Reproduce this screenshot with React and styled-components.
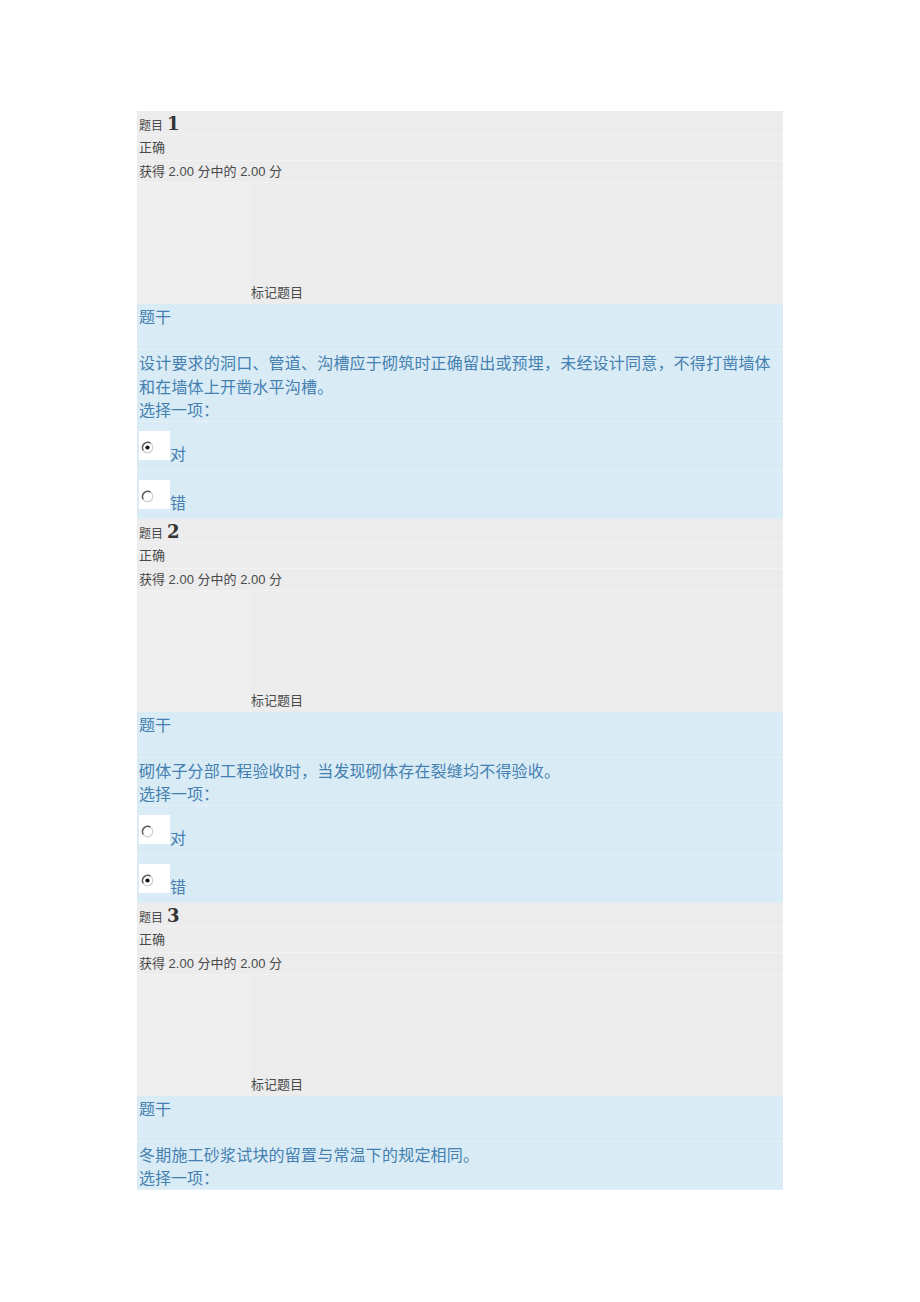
import React from "react";
import styled, { createGlobalStyle } from "styled-components";

const GlobalStyle = createGlobalStyle`
  html, body {
    margin: 0;
    padding: 0;
    background: #fff;
  }
  body {
    font-family: "Liberation Sans", "Noto Sans CJK SC", sans-serif;
  }
`;

const Page = styled.div`
  width: 920px;
  min-height: 1302px;
  padding-top: 111px;
  box-sizing: border-box;
`;

const Panel = styled.div`
  width: 646px;
  margin-left: 137px;
`;

// 灰色信息区
const Info = styled.div`
  background: #ececed;
  color: #4a4a4a;
  font-size: 13px;
  padding-top: 2px;
`;

const InfoRow = styled.div`
  height: ${(p) => p.h}px;
  line-height: ${(p) => p.h}px;
  padding-left: 2px;
  border-bottom: 1px solid #f2f2f3;
  box-sizing: border-box;
  white-space: nowrap;
`;

const QLabel = styled.span`
  font-size: 12px;
`;

const QNum = styled.span`
  font-family: "DejaVu Serif", "Liberation Serif", serif;
  font-weight: bold;
  font-size: 18px;
  margin-left: 4px;
  color: #333;
`;

const Flag = styled.div`
  display: grid;
  grid-template-columns: 114px 1fr;
  height: 121px;
`;

const FlagSide = styled.div`
  background: #efeff0;
`;

const FlagMain = styled.div`
  display: flex;
  align-items: flex-end;
  padding-bottom: 3px;
  font-size: 13px;
  color: #4a4a4a;
`;

// 蓝色题干区
const Body = styled.div`
  background: #d9ecf6;
  color: #4580b0;
  font-family: "Noto Sans CJK SC", sans-serif;
`;

const StemTitle = styled.div`
  height: 26px;
  line-height: 24px;
  font-size: 16px;
  padding-left: 2px;
  margin-bottom: 20px;
`;

const Question = styled.div`
  font-size: 16px;
  letter-spacing: 0.2px;
  line-height: 24px;
  padding: 0 2px;
  border-top: 1px solid #e2f1f9;
  margin-top: -1px;
`;

const Prompt = styled.div`
  font-size: 16px;
  line-height: 23px;
  padding-left: 2px;
  border-bottom: 1px solid #e2f1f9;
`;

const Option = styled.div`
  display: flex;
  align-items: flex-start;
  height: 48.5px;
  padding: 9px 0 0 2px;
  box-sizing: border-box;
  border-bottom: 1px solid #e2f1f9;
  &:last-child {
    border-bottom: none;
  }
`;

const RadioBox = styled.div`
  width: 31px;
  height: 29px;
  background: #fff;
  padding: 4px 0 0 2px;
  box-sizing: border-box;
`;

const OptLabel = styled.span`
  font-size: 16px;
  line-height: 16px;
  padding-top: 14px;
`;

const Radio = ({ checked }) => (
  <svg width="13" height="13" viewBox="0 0 13 13">
    <circle cx="6.5" cy="6.5" r="5.3" fill="#fff" stroke="#cfcfcf" strokeWidth="1.2" />
    <path d="M2.2 9.2 A5.3 5.3 0 0 1 9.4 2.0" fill="none" stroke="#5e5e5e" strokeWidth="1.5" />
    {checked && <circle cx="6.5" cy="6.5" r="2.1" fill="#111" />}
  </svg>
);

const questions = [
  {
    n: 1,
    text: "设计要求的洞口、管道、沟槽应于砌筑时正确留出或预埋，未经设计同意，不得打凿墙体和在墙体上开凿水平沟槽。",
    answer: "对",
  },
  {
    n: 2,
    text: "砌体子分部工程验收时，当发现砌体存在裂缝均不得验收。",
    answer: "错",
  },
  {
    n: 3,
    text: "冬期施工砂浆试块的留置与常温下的规定相同。",
    answer: null,
  },
];

const QuestionBlock = ({ n, text, answer }) => (
  <>
    <Info>
      <InfoRow h={22}>
        <QLabel>题目</QLabel>
        <QNum>{n}</QNum>
      </InfoRow>
      <InfoRow h={26}>正确</InfoRow>
      <InfoRow h={22}>获得 2.00 分中的 2.00 分</InfoRow>
      <Flag>
        <FlagSide />
        <FlagMain>标记题目</FlagMain>
      </Flag>
    </Info>
    <Body>
      <StemTitle>题干</StemTitle>
      <Question>{text}</Question>
      <Prompt>选择一项：</Prompt>
      {answer &&
        ["对", "错"].map((o) => (
          <Option key={o}>
            <RadioBox>
              <Radio checked={o === answer} />
            </RadioBox>
            <OptLabel>{o}</OptLabel>
          </Option>
        ))}
    </Body>
  </>
);

export default function App() {
  return (
    <Page>
      <GlobalStyle />
      <Panel>
        {questions.map((q) => (
          <QuestionBlock key={q.n} {...q} />
        ))}
      </Panel>
    </Page>
  );
}
